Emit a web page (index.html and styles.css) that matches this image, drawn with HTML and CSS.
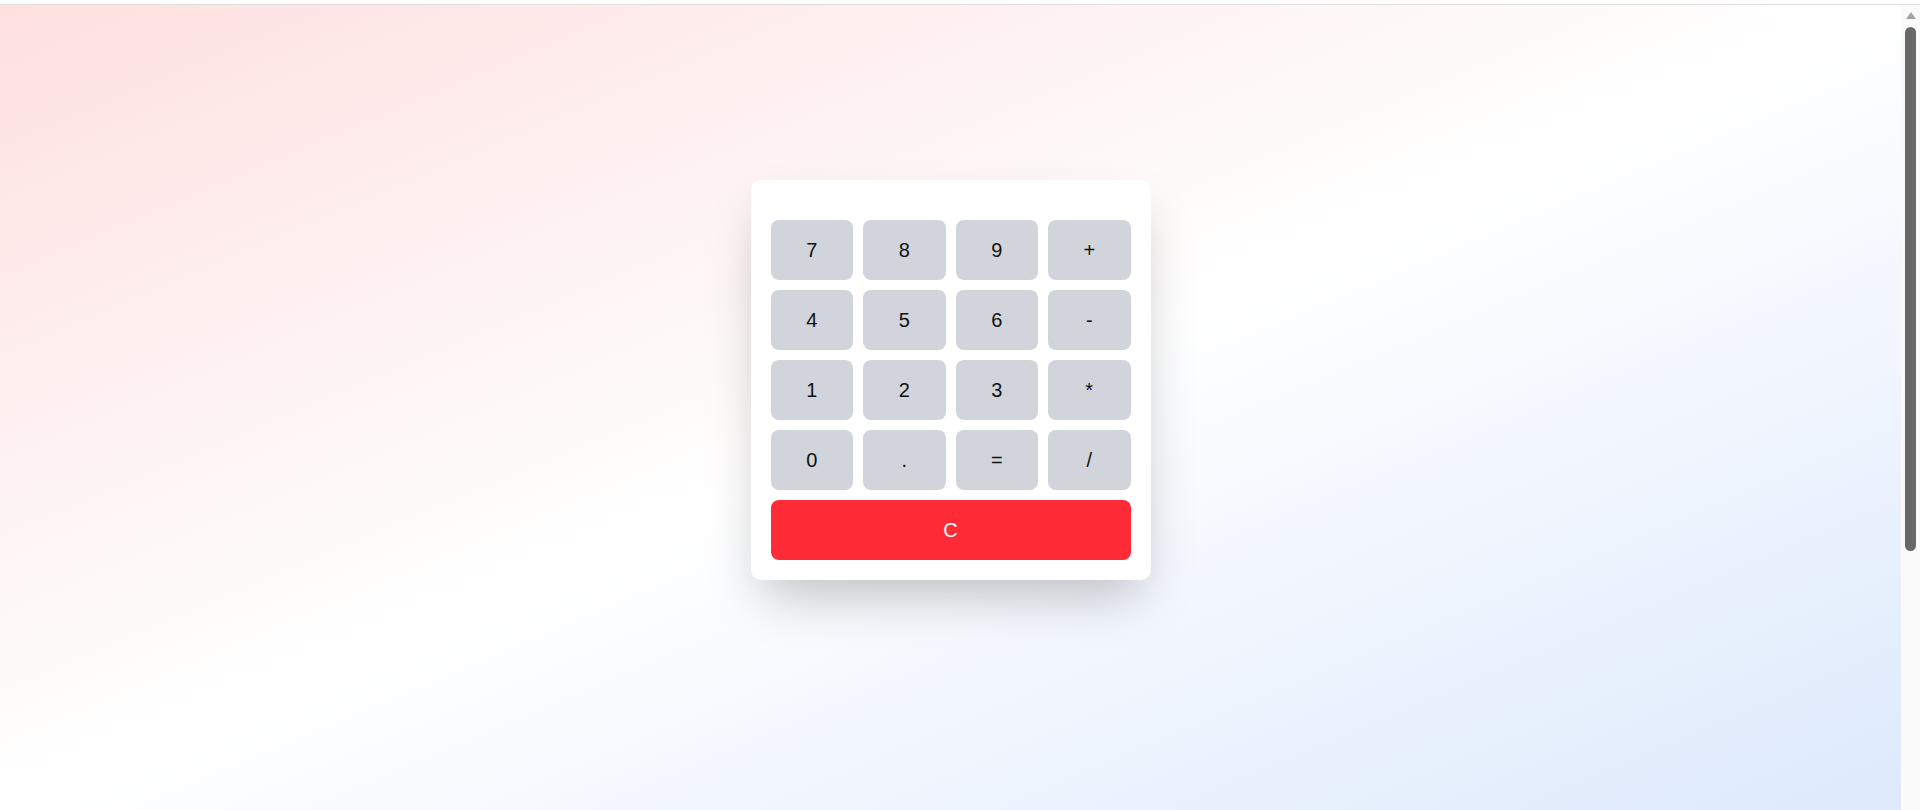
FILE: index.html
```html
<!DOCTYPE html>
<html lang="en">
<head>
<meta charset="utf-8">
<title>Calculator</title>
<link rel="stylesheet" href="styles.css">
</head>
<body>
<div class="topbar"></div>
<div class="frame">
  <main class="page">
    <div class="calc">
      <div class="display"></div>
      <div class="keys">
        <button class="key">7</button>
        <button class="key">8</button>
        <button class="key">9</button>
        <button class="key">+</button>
        <button class="key">4</button>
        <button class="key">5</button>
        <button class="key">6</button>
        <button class="key">-</button>
        <button class="key">1</button>
        <button class="key">2</button>
        <button class="key">3</button>
        <button class="key">*</button>
        <button class="key">0</button>
        <button class="key">.</button>
        <button class="key">=</button>
        <button class="key">/</button>
        <button class="key clear">C</button>
      </div>
    </div>
  </main>
  <aside class="scrollbar" aria-hidden="true">
    <div class="scroll-arrow"></div>
    <div class="scroll-thumb"></div>
  </aside>
</div>
</body>
</html>
```

FILE: styles.css
```css
html, body {
  margin: 0;
  padding: 0;
}
body {
  font-family: "Liberation Sans", Arial, sans-serif;
  background: #ffffff;
  overflow: hidden;
}
.topbar {
  height: 4px;
  background: #ffffff;
  border-bottom: 1px solid #dedede;
}
.frame {
  display: flex;
  height: 805px;
}
.page {
  flex: 1;
  box-sizing: border-box;
  padding-top: 175px;
  display: flex;
  justify-content: center;
  align-items: flex-start;
  background: linear-gradient(to bottom right, #fee0e0 0%, #ffffff 50%, #dde9fc 100%);
}
.scrollbar {
  width: 19px;
  flex: none;
  background: #fafafa;
  display: flex;
  flex-direction: column;
  align-items: center;
}
.scroll-arrow {
  width: 0;
  height: 0;
  margin-top: 7px;
  border-left: 5.5px solid transparent;
  border-right: 5.5px solid transparent;
  border-bottom: 7px solid #a3a3a3;
}
.scroll-thumb {
  width: 11px;
  height: 524px;
  margin-top: 8px;
  border-radius: 6px;
  background: #686868;
}
.calc {
  width: 400px;
  box-sizing: border-box;
  padding: 20px;
  background: #ffffff;
  border-radius: 10px;
  box-shadow: 0 25px 50px -12px rgba(0, 0, 0, 0.25);
}
.display {
  height: 20px;
}
.keys {
  display: grid;
  grid-template-columns: repeat(4, 1fr);
  grid-auto-rows: 60px;
  gap: 10px;
}
.key {
  border: none;
  border-radius: 8px;
  background: #d1d5db;
  color: #111111;
  font-family: "Liberation Sans", Arial, sans-serif;
  font-size: 20px;
  padding: 0;
  cursor: pointer;
}
.clear {
  grid-column: 1 / -1;
  background: #ff2b37;
  color: #ffffff;
}
```
